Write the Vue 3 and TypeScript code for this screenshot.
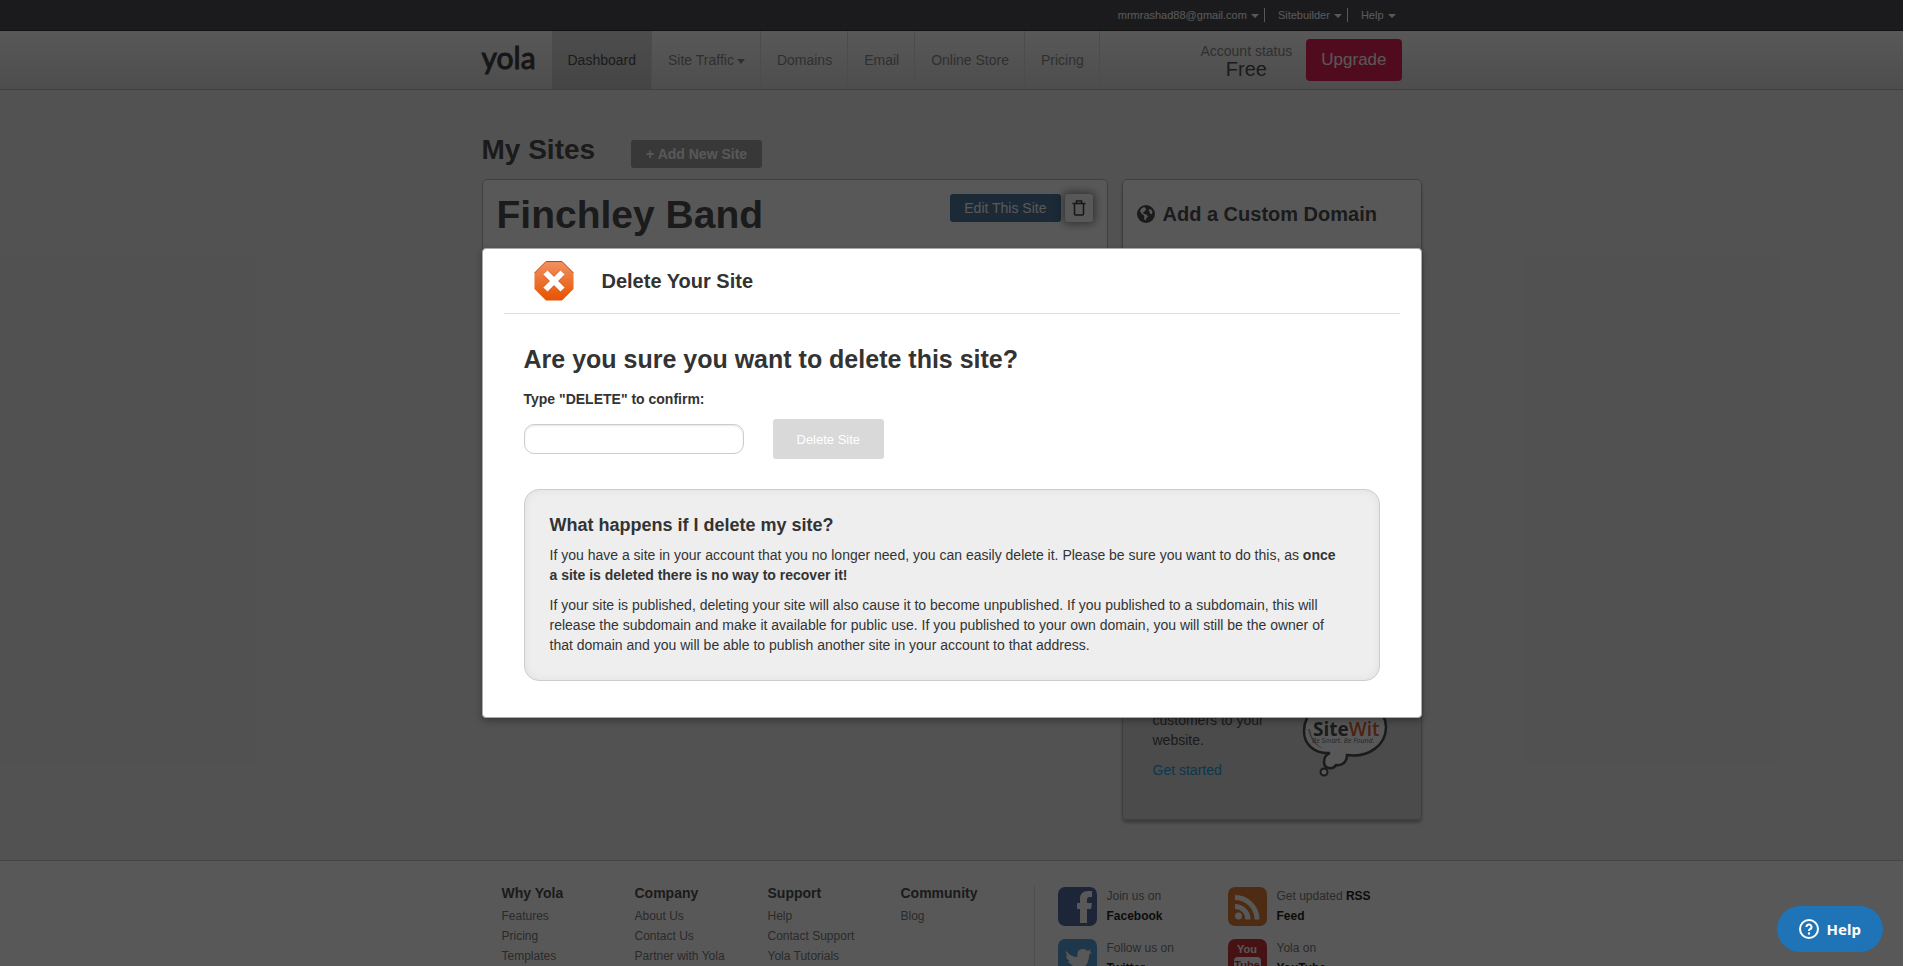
<script setup lang="ts">
import { computed, ref } from 'vue'

interface NavItem { label: string; active?: boolean; caret?: boolean }
interface FooterColumn { title: string; links: string[] }

const accountLinks: string[] = ['mrmrashad88@gmail.com', 'Sitebuilder', 'Help']

const navItems: NavItem[] = [
  { label: 'Dashboard', active: true },
  { label: 'Site Traffic', caret: true },
  { label: 'Domains' },
  { label: 'Email' },
  { label: 'Online Store' },
  { label: 'Pricing' },
]

const footerColumns: FooterColumn[] = [
  { title: 'Why Yola', links: ['Features', 'Pricing', 'Templates'] },
  { title: 'Company', links: ['About Us', 'Contact Us', 'Partner with Yola'] },
  { title: 'Support', links: ['Help', 'Contact Support', 'Yola Tutorials'] },
  { title: 'Community', links: ['Blog'] },
]

const confirmation = ref('')
const canDelete = computed(() => confirmation.value === 'DELETE')
</script>

<template>
  <div class="viewport">
    <div class="page">
      <div class="topbar">
        <nav class="wrap account" aria-label="Account">
          <a v-for="item in accountLinks" :key="item" href="#">{{ item }}<i class="caret small"></i></a>
        </nav>
      </div>

      <header class="header">
        <div class="wrap header-row">
          <a class="logo" href="#">yola</a>
          <nav class="nav" aria-label="Main">
            <a v-for="item in navItems" :key="item.label" href="#" :class="{ active: item.active }">{{ item.label }}<i v-if="item.caret" class="caret"></i></a>
          </nav>
          <div class="status">
            <span class="status-label">Account status</span>
            <span class="status-plan">Free</span>
          </div>
          <button class="upgrade" type="button">Upgrade</button>
        </div>
      </header>

      <main class="wrap main">
        <div class="title-row">
          <h1>My Sites</h1>
          <button class="btn add" type="button">+ Add New Site</button>
        </div>
        <div class="columns">
          <section class="card site">
            <h2>Finchley Band</h2>
            <div class="site-actions">
              <button class="btn edit" type="button">Edit This Site</button>
              <button class="trash" type="button" aria-label="Delete site">
                <svg width="14" height="16" viewBox="0 0 14 16" fill="none" stroke="#222" stroke-width="1.5">
                  <path d="M.5 3.500H13.500M4.500 3.500V1H9.500V3.500M2.500 3.500V14Q2.500 15 3.500 15H10.500Q11.500 15 11.500 14V3.500" />
                </svg>
              </button>
            </div>
          </section>
          <aside class="card side">
            <h3>
              <svg width="18" height="18" viewBox="0 0 18 18">
                <circle cx="9" cy="9" r="9" fill="#333" />
                <path d="M7 2 4.500 3.500 3 6 4 8 6.500 10 7.500 12 7 14 8.500 15.500 9.500 13 11 11.500 9.500 9.500 7 9 6 7.500 8 6 9 4.500 8.500 3ZM12.500 4 11.500 6 13 6.500 12.500 8 14.500 9.500 15.500 7 14.500 5Z" fill="#fff" />
              </svg>
              Add a Custom Domain
            </h3>
            <div class="promo">
              <div class="promo-text">
                <p>customers to your website.</p>
                <a href="#">Get started</a>
              </div>
              <svg class="sitewit" width="86" height="86" viewBox="0 0 86 86" role="img" aria-label="SiteWit">
                <g fill="#fff" stroke="#333" stroke-width="2.500">
                  <path d="M28 62C12 63 2 53 2 40C2 20 20 8 44 8C68 8 84 20 84 36C84 54 67 67 45 64C45 71 40 75 34 74C31 79 22 78 22 71C22 66 25 63 28 62Z" />
                  <circle cx="22" cy="81" r="3.500" stroke-width="2" />
                </g>
                <path d="M6 38Q9 54 22 58Q10 52 8 38Z" fill="#999" />
                <text x="11" y="45" class="wit-name"><tspan class="wit-site">Site</tspan><tspan class="wit-wit">Wit</tspan></text>
                <text x="10" y="52" class="wit-tag">Be Smart. Be Found.</text>
              </svg>
            </div>
          </aside>
        </div>
      </main>

      <footer class="footer">
        <div class="wrap footer-row">
          <div class="footer-links">
            <div v-for="col in footerColumns" :key="col.title" class="footer-col">
              <h4>{{ col.title }}</h4>
              <a v-for="link in col.links" :key="link" href="#">{{ link }}</a>
            </div>
          </div>
          <div class="social">
            <a href="#">
              <svg width="39" height="39" viewBox="0 0 39 39">
                <rect width="39" height="39" rx="7" fill="#3b5998" />
                <path d="M22 36V22H19V16H22V12Q22 4 30 4H34V10H31Q29 10 29 12.500V16H34L33 22H29V36Z" fill="#fff" />
              </svg>
              <span>Join us on <b>Facebook</b></span>
            </a>
            <a href="#">
              <svg width="39" height="39" viewBox="0 0 39 39">
                <rect width="39" height="39" rx="7" fill="#dd6b1a" />
                <circle cx="10.500" cy="29" r="3.500" fill="#fff" />
                <path d="M7 19.500A13 13 0 0 1 20 32.500M7 10.500A22 22 0 0 1 29 32.500" fill="none" stroke="#fff" stroke-width="5" />
              </svg>
              <span>Get updated <b>RSS Feed</b></span>
            </a>
            <a href="#">
              <svg width="39" height="39" viewBox="0 0 39 39">
                <rect width="39" height="39" rx="7" fill="#3f8fd2" />
                <path d="M8 12Q13 18 19.500 18Q18.500 10 25 10Q28 10 29.500 12L33 10.500 31.500 13.500 34 13 31 16Q31 30 17 31Q11 31 7 28Q12 28 15 26Q11 25 10 22H12Q8 20 8 16L10 17Q7 14 8 12Z" fill="#fff" />
              </svg>
              <span>Follow us on <b>Twitter</b></span>
            </a>
            <a href="#">
              <svg width="39" height="39" viewBox="0 0 39 39">
                <rect width="39" height="39" rx="7" fill="#c4161c" />
                <rect x="6" y="18" width="27" height="18" rx="4" fill="#fff" />
                <text x="19" y="14" class="yt" fill="#fff">You</text>
                <text x="19" y="30" class="yt" fill="#c4161c">Tube</text>
              </svg>
              <span>Yola on <b>YouTube</b></span>
            </a>
          </div>
        </div>
      </footer>
    </div>

    <div class="overlay">
      <section class="modal" role="dialog" aria-labelledby="modal-title">
        <div class="modal-head">
          <svg width="40" height="40" viewBox="0 0 40 40">
            <defs>
              <linearGradient id="stop" x1="0" y1="0" x2="0" y2="1">
                <stop offset="0" stop-color="#f2915f" />
                <stop offset="1" stop-color="#e65300" />
              </linearGradient>
            </defs>
            <path d="M12 .5H28L39.500 12V28L28 39.500H12L.5 28V12Z" fill="url(#stop)" />
            <path d="M.5 12 12 .5H28L39.500 12" fill="none" stroke="#b8431a" />
            <path d="M12 12 28 28M28 12 12 28" stroke="#b8431a" stroke-width="7" opacity=".5" />
            <path d="M11.500 11.500 28.500 28.500M28.500 11.500 11.500 28.500" stroke="#fff" stroke-width="6" />
          </svg>
          <h2 id="modal-title">Delete Your Site</h2>
        </div>
        <form class="modal-body" @submit.prevent>
          <h3>Are you sure you want to delete this site?</h3>
          <label for="confirm">Type "DELETE" to confirm:</label>
          <div class="confirm-row">
            <input id="confirm" v-model="confirmation" type="text" autocomplete="off" />
            <button type="submit" class="delete" :class="{ ready: canDelete }" :disabled="!canDelete">Delete Site</button>
          </div>
          <div class="info">
            <h4>What happens if I delete my site?</h4>
            <p>If you have a site in your account that you no longer need, you can easily delete it. Please be sure you want to do this, as <b>once a site is deleted there is no way to recover it!</b></p>
            <p>If your site is published, deleting your site will also cause it to become unpublished. If you published to a subdomain, this will release the subdomain and make it available for public use. If you published to your own domain, you will still be the owner of that domain and you will be able to publish another site in your account to that address.</p>
          </div>
        </form>
      </section>
    </div>

    <button class="help" type="button">
      <svg width="20" height="20" viewBox="0 0 20 20" fill="none" stroke="#fff" stroke-width="2">
        <circle cx="10" cy="10" r="9" />
        <path d="M7.500 8A2.500 2.500 0 1 1 11 10.200Q10 10.700 10 12" />
        <circle cx="10" cy="14.500" r=".6" stroke-width="1.200" />
      </svg>
      Help
    </button>
  </div>
</template>

<style>
body {
  margin: 0;
  background: #fff;
}
</style>

<style scoped>
* {
  box-sizing: border-box;
}
.viewport {
  position: relative;
  height: 100vh;
  margin-right: 17px;
  overflow: hidden;
  font: 14px/20px "Liberation Sans", Arial, sans-serif;
  color: #333;
}
h1, h2, h3, h4, p {
  margin: 0;
}
a {
  color: inherit;
  text-decoration: none;
}
button {
  border: 0;
  font-family: inherit;
  cursor: pointer;
}
.page {
  display: flex;
  flex-direction: column;
  background: #e9e9e9;
}
.wrap {
  width: 100%;
  max-width: 940px;
  margin: 0 auto;
}
.topbar {
  background: #32353b;
  border-bottom: 1px solid #15161a;
}
.account {
  display: flex;
  justify-content: flex-end;
  height: 30px;
  padding: 8px 26px 8px 0;
  font-size: 11px;
  line-height: 14px;
  color: #fff;
}
.account a {
  padding-left: 13px;
  padding-right: 5px;
}
.account a + a {
  border-left: 1px solid #fff;
}
.account a:last-child {
  padding-right: 0;
}
.caret {
  display: inline-block;
  margin-left: 3px;
  border: 4px solid transparent;
  border-top: 5px solid currentColor;
  border-bottom: 0;
  vertical-align: middle;
}
.caret.small {
  margin-left: 4px;
  border-width: 4px 4px 0;
}
.header {
  background: linear-gradient(#fff, #dadada);
  border-bottom: 1px solid #aaa;
}
.header-row {
  display: flex;
  height: 58px;
}
.logo {
  width: 70px;
  font: 30px/52px Lato, "Liberation Sans", sans-serif;
  color: #222;
  -webkit-text-stroke: 1px #222;
}
.nav {
  display: flex;
  color: #777;
}
.nav a {
  padding: 19px 15px 19px 16px;
  border-right: 1px solid #d8d8d8;
}
.nav a.active {
  background: linear-gradient(#d8d8d8, #bfbfbf);
  color: #333;
}
.status {
  display: flex;
  flex-direction: column;
  align-items: center;
  margin-left: auto;
  margin-right: 14px;
  padding-top: 11px;
}
.status-label {
  line-height: 18px;
  color: #777;
}
.status-plan {
  font-size: 20px;
  line-height: 18px;
}
.upgrade {
  height: 42px;
  margin: 8px 20px 0 0;
  padding: 0 15px;
  border-radius: 4px;
  background: #e4003f;
  color: #fff;
  font-size: 17px;
}
.main {
  padding: 44px 0 40px;
}
.title-row {
  display: flex;
  gap: 36px;
  height: 45px;
}
h1 {
  font-size: 28px;
  line-height: 32px;
}
.btn {
  height: 28px;
  padding: 0 14px;
  border-radius: 3px;
  color: #fff;
  font-size: 14px;
}
.add {
  margin-top: 6px;
  padding: 0 15px;
  background: #939393;
  font-weight: bold;
}
.columns {
  display: grid;
  grid-template-columns: 1fr 300px;
  gap: 14px;
  align-items: start;
}
.card {
  border: 1px solid #aaa;
  border-radius: 5px;
  background: #fff;
}
.site {
  display: flex;
  justify-content: space-between;
  min-height: 500px;
  padding: 14px;
}
.site h2 {
  font-size: 39px;
  line-height: 42px;
}
.site-actions {
  display: flex;
  gap: 4px;
}
.edit {
  background: #35648c;
}
.trash {
  display: flex;
  align-items: center;
  justify-content: center;
  width: 28px;
  height: 28px;
  padding: 0;
  border-radius: 3px;
  background: #fff;
  box-shadow: 0 0 8px 2px rgba(0, 0, 0, .5);
}
.side {
  display: flex;
  flex-direction: column;
  min-height: 641px;
  background: linear-gradient(#fff 40%, #d2d2d2 60%);
  box-shadow: 0 3px 3px rgba(0, 0, 0, .3);
}
.side h3 {
  display: flex;
  align-items: center;
  gap: 8px;
  padding: 24px 14px;
  font-size: 20px;
}
.promo {
  display: flex;
  align-items: flex-end;
  margin-top: auto;
  padding: 0 33px 39px 30px;
}
.promo-text {
  flex: 1;
  padding-right: 30px;
}
.promo-text p {
  margin-bottom: 10px;
}
.promo-text a {
  color: #0090dd;
}
.sitewit {
  margin-bottom: 3px;
}
.wit-name {
  font: bold 19px "Open Sans", sans-serif;
}
.wit-site {
  fill: #333;
}
.wit-wit {
  fill: #d94a10;
  font-weight: 600;
}
.wit-tag {
  font: italic 7px "Open Sans", sans-serif;
  fill: #555;
}
.footer {
  border-top: 1px solid #bbb;
  background: #fff;
}
.footer-row {
  display: flex;
  padding: 22px 0 25px 20px;
  font-size: 12px;
  color: #666;
}
.footer-links {
  display: grid;
  grid-template-columns: repeat(4, 133px);
}
.footer-col {
  display: flex;
  flex-direction: column;
}
.footer-col h4 {
  margin-bottom: 3px;
  font-size: 14px;
  line-height: 20px;
  color: #333;
}
.social {
  display: grid;
  grid-template-columns: 170px 170px;
  row-gap: 12px;
  align-content: start;
  margin-top: 3px;
  padding-left: 23px;
  border-left: 1px solid #ddd;
}
.social a {
  display: flex;
  gap: 10px;
  height: 40px;
}
.social svg {
  flex: none;
  margin-top: 1px;
}
.social span {
  width: 96px;
}
.social a:nth-child(odd) b,
.social a:last-child b {
  display: block;
}
.social b {
  color: #000;
}
.yt {
  font: bold 11px "Liberation Sans", sans-serif;
  text-anchor: middle;
}
.overlay {
  position: absolute;
  inset: 0;
  padding-top: 248px;
  background: rgba(17, 17, 17, .7);
}
.modal {
  width: 100%;
  max-width: 940px;
  margin: 0 auto;
  border: 1px solid #aaa;
  border-radius: 4px;
  background: #fff;
  box-shadow: 0 3px 7px rgba(0, 0, 0, .3);
}
.modal-head {
  display: flex;
  align-items: center;
  gap: 28px;
  margin: 0 21px;
  padding: 12px 30px;
  border-bottom: 1px solid #ddd;
}
.modal-head h2 {
  font-size: 20px;
  line-height: 30px;
}
.modal-body {
  padding: 25px 41px 36px;
}
.modal-body h3 {
  font-size: 25px;
  line-height: 40px;
}
.modal-body label {
  display: block;
  margin-top: 10px;
  font-weight: bold;
}
.confirm-row {
  display: flex;
  align-items: center;
  gap: 29px;
  margin: 10px 0 30px;
}
.confirm-row input {
  width: 220px;
  height: 30px;
  padding: 4px 10px;
  border: 1px solid #ccc;
  border-radius: 10px;
  box-shadow: inset 0 1px 2px rgba(0, 0, 0, .1);
  font: inherit;
}
.delete {
  height: 40px;
  padding: 0 24px;
  border-radius: 3px;
  background: #d9d9d9;
  color: #fff;
  font-size: 13px;
}
.delete.ready {
  background: #e65300;
}
.info {
  padding: 25px 36px 25px 25px;
  border: 1px solid #ccc;
  border-radius: 15px;
  background: #eee;
  box-shadow: inset 0 0 10px rgba(0, 0, 0, .06);
}
.info h4 {
  font-size: 18px;
  line-height: 20px;
}
.info p {
  margin-top: 10px;
}
.help {
  position: absolute;
  right: 20px;
  bottom: 14px;
  display: flex;
  align-items: center;
  gap: 8px;
  height: 46px;
  padding: 0 22px;
  border-radius: 23px;
  background: #1f73b7;
  color: #fff;
  font: bold 15px "Noto Sans", sans-serif;
}
</style>
